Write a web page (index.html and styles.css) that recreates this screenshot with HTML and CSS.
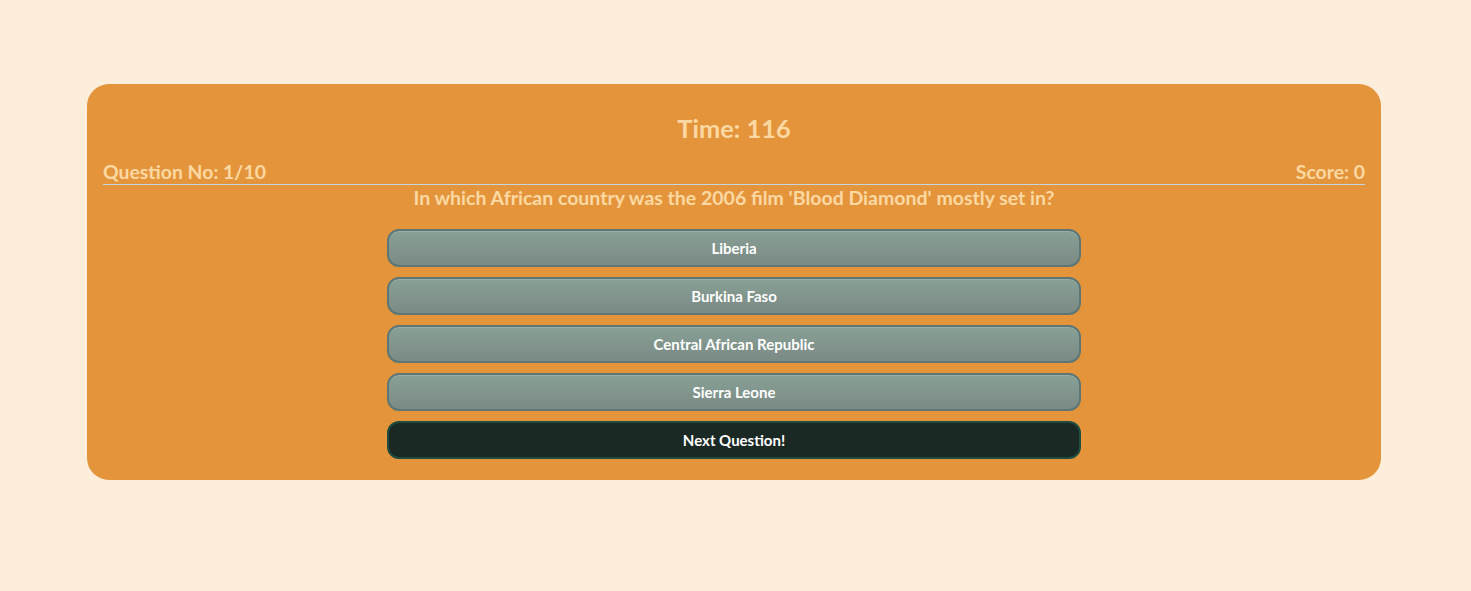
FILE: index.html
```html
<!DOCTYPE html>
<html>
<head>
<meta charset="utf-8">
<link rel="stylesheet" href="styles.css">
</head>
<body>
<main class="quiz">
  <h2 class="timer">Time: 116</h2>
  <div class="status">
    <span>Question No: 1/10</span>
    <span>Score: 0</span>
  </div>
  <p class="question">In which African country was the 2006 film 'Blood Diamond' mostly set in?</p>
  <div class="answers">
    <button class="answer">Liberia</button>
    <button class="answer">Burkina Faso</button>
    <button class="answer">Central African Republic</button>
    <button class="answer">Sierra Leone</button>
    <button class="next">Next Question!</button>
  </div>
</main>
</body>
</html>
```
FILE: styles.css
```css
html, body {
  margin: 0;
  padding: 0;
}
body {
  background: #fdeddb;
  font-family: Lato, "Open Sans", sans-serif;
  padding-top: 84px;
}
.quiz {
  margin: 0 90px 0 87px;
  background: #e4953c;
  border-radius: 22px;
  padding: 30px 16px 21px;
  color: #fcd8a2;
}
.timer {
  margin: 0;
  text-align: center;
  font-size: 25.4px;
  line-height: 28px;
  font-weight: 700;
}
.status {
  margin-top: 18px;
  display: flex;
  justify-content: space-between;
  font-size: 19.4px;
  line-height: 24px;
  font-weight: 700;
  border-bottom: 1px solid #c3d6e2;
}
.question {
  margin: 2px 0 0;
  text-align: center;
  font-size: 19.5px;
  line-height: 22px;
  font-weight: 700;
}
.answers {
  margin: 20px auto 0;
  width: 694px;
  display: flex;
  flex-direction: column;
  gap: 10px;
}
.answers button {
  height: 38px;
  border-radius: 12px;
  font-family: Lato, "Open Sans", sans-serif;
  font-size: 15px;
  font-weight: 700;
  color: #ffffff;
  padding: 0;
}
.answer {
  background: linear-gradient(#88a096, #7a8a84);
  border: 2px solid #5e7776;
  box-shadow: inset 0 1px 0 rgba(255,255,255,0.15);
}
.next {
  background: #1b2925;
  border: 2px solid #1f4c40;
}
```
